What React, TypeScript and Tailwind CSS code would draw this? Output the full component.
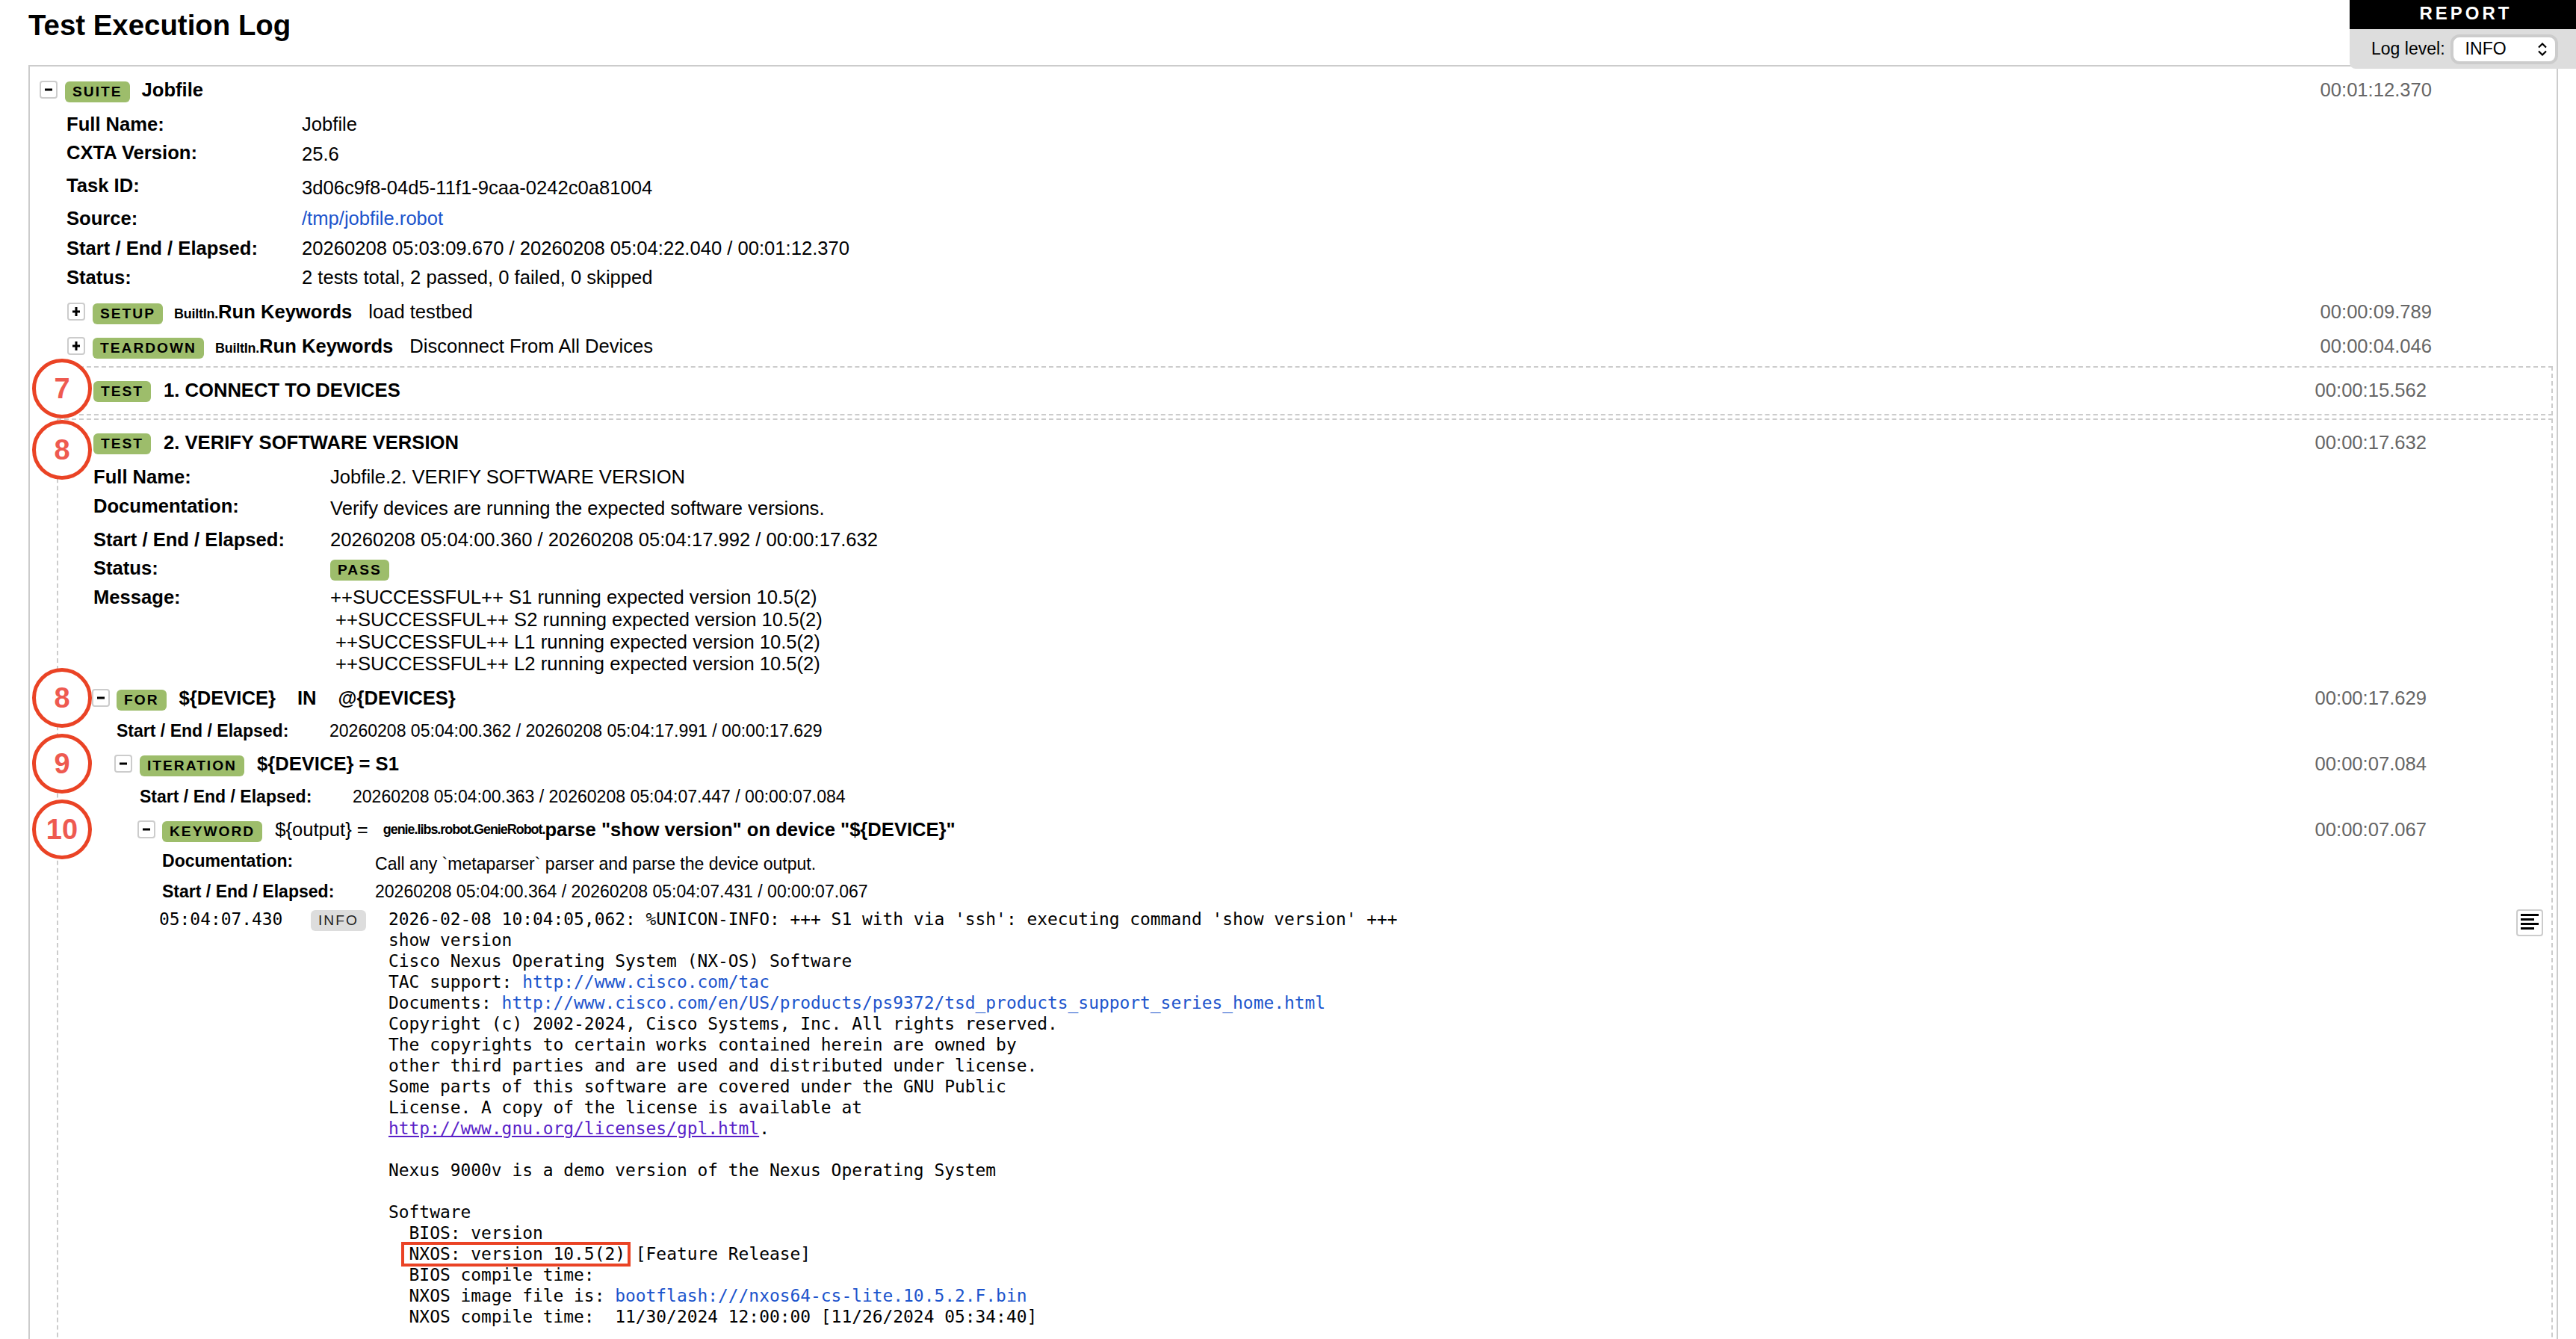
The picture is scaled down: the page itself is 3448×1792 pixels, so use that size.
import React from "react";

function Toggle({ plus = false }: { plus?: boolean }) {
  return (
    <span className="flex h-6 w-6 shrink-0 items-center justify-center rounded-[4px] border-2 border-[#ccc] bg-white">
      <svg width="12" height="14" viewBox="0 0 12 14">
        <rect x="1" y="5.5" width="10" height="3" fill="#000" />
        {plus && <rect x="4.5" y="1" width="3" height="12" fill="#000" />}
      </svg>
    </span>
  );
}

function Badge({ children, gray = false }: { children: React.ReactNode; gray?: boolean }) {
  return (
    <span
      className={`mt-1 inline-flex h-7 shrink-0 items-center rounded-[6px] px-[10px] text-[19.2px] tracking-[2px] ${
        gray ? "bg-[#ddd] font-normal text-[#222]" : "bg-[#9dbd6b] font-bold text-black"
      }`}
    >
      {children}
    </span>
  );
}

function Elapsed({ children }: { children: React.ReactNode }) {
  return <span className="ml-auto mr-[167px] font-normal text-[#666]">{children}</span>;
}

function Circle({ n, className }: { n: number; className: string }) {
  return (
    <div
      className={`absolute left-[43px] flex h-20 w-20 items-center justify-center rounded-full border-[5px] border-[#ea4325] bg-white text-[38px] font-bold text-[#ee5a50] ${className}`}
    >
      {n}
    </div>
  );
}

const link = "text-[#1c54cc]";

export default function App() {
  return (
    <div className="relative h-[1792px] overflow-hidden bg-white font-['Liberation_Sans',sans-serif] text-[25.6px] text-black">
      <h1 className="flex h-[87px] items-start pl-[38px] pt-[10px] text-[38.4px] font-bold leading-[48px]">
        Test Execution Log
      </h1>

      {/* Report header panel */}
      <div className="absolute right-0 top-0 z-10 w-[303px]">
        <div className="flex h-[39px] items-center justify-center bg-black pb-1 pl-2 text-[24px] font-bold tracking-[4px] text-white">
          REPORT
        </div>
        <div className="flex h-[53px] items-center rounded-bl-[8px] bg-[#ddd] pl-[29px] text-[23.04px]">
          <span>Log level:</span>
          <div className="ml-[7px] flex h-10 w-[144px] items-center justify-between rounded-[12px] border-4 border-[#ccc] bg-white pl-4 pr-[10px]">
            <span>INFO</span>
            <svg width="14" height="20" viewBox="0 0 14 20" fill="none" stroke="#000" strokeWidth="2.2">
              <path d="M2 7.5 7 2.5 12 7.5" />
              <path d="M2 12.5 7 17.5 12 12.5" />
            </svg>
          </div>
        </div>
      </div>

      {/* Suite */}
      <div className="ml-[38px] mr-6 h-[1800px] border-2 border-[#ccc]">
        <div className="flex h-[62px] items-center pl-[13px]">
          <Toggle />
          <span className="ml-[10px]"><Badge>SUITE</Badge></span>
          <b className="ml-4">Jobfile</b>
          <Elapsed>00:01:12.370</Elapsed>
        </div>

        <div className="pl-[49px]">
          <div className="flex h-[30px] items-center">
            <b className="w-[315px]">Full Name:</b>
            <span>Jobfile</span>
          </div>
          <div className="flex h-[48px] items-center">
            <b className="w-[315px] pb-[2px]">CXTA Version:</b>
            <span className="pt-[2px]">25.6</span>
          </div>
          <div className="flex h-[41px] items-center">
            <b className="w-[315px] pb-[3px]">Task ID:</b>
            <span className="pt-[3px]">3d06c9f8-04d5-11f1-9caa-0242c0a81004</span>
          </div>
          <div className="flex h-[44px] items-center">
            <b className="w-[315px]">Source:</b>
            <span className={link}>/tmp/jobfile.robot</span>
          </div>
          <div className="flex h-[36px] items-center">
            <b className="w-[315px]">Start / End / Elapsed:</b>
            <span>20260208 05:03:09.670 / 20260208 05:04:22.040 / 00:01:12.370</span>
          </div>
          <div className="flex h-[42px] items-center">
            <b className="w-[315px]">Status:</b>
            <span>2 tests total, 2 passed, 0 failed, 0 skipped</span>
          </div>
        </div>

        <div className="flex h-[50px] items-center pl-[50px]">
          <Toggle plus />
          <span className="ml-[10px]"><Badge>SETUP</Badge></span>
          <span className="ml-[15px]">
            <span className="text-[17.92px] font-bold tracking-[-0.2px]">BuiltIn.</span>
            <b>Run Keywords</b>
          </span>
          <span className="ml-[22px]">load testbed</span>
          <Elapsed>00:00:09.789</Elapsed>
        </div>
        <div className="flex h-[42px] items-center pl-[50px]">
          <Toggle plus />
          <span className="ml-[10px]"><Badge>TEARDOWN</Badge></span>
          <span className="ml-[15px]">
            <span className="text-[17.92px] font-bold tracking-[-0.2px]">BuiltIn.</span>
            <b>Run Keywords</b>
          </span>
          <span className="ml-[22px]">Disconnect From All Devices</span>
          <Elapsed>00:00:04.046</Elapsed>
        </div>

        {/* Test 1 */}
        <div className="ml-9 mr-[5px] mt-[6px] border-2 border-dashed border-[#ccc]">
          <div className="flex h-[60px] items-center pl-[47px]">
            <Badge>TEST</Badge>
            <b className="ml-[17px]">1. CONNECT TO DEVICES</b>
            <Elapsed>00:00:15.562</Elapsed>
          </div>
          <div className="h-[2px]" />
        </div>

        {/* Test 2 */}
        <div className="ml-9 mr-[5px] mt-1 h-[1400px] border-2 border-dashed border-[#ccc]">
          <div className="flex h-[60px] items-center pl-[47px]">
            <Badge>TEST</Badge>
            <b className="ml-[17px]">2. VERIFY SOFTWARE VERSION</b>
            <Elapsed>00:00:17.632</Elapsed>
          </div>

          <div className="pl-[47px]">
            <div className="flex h-8 items-center">
              <b className="w-[317px]">Full Name:</b>
              <span>Jobfile.2. VERIFY SOFTWARE VERSION</span>
            </div>
            <div className="flex h-[49px] items-center">
              <b className="w-[317px] pb-[3px]">Documentation:</b>
              <span className="pt-[3px]">Verify devices are running the expected software versions.</span>
            </div>
            <div className="flex h-[38px] items-center">
              <b className="w-[317px]">Start / End / Elapsed:</b>
              <span>20260208 05:04:00.360 / 20260208 05:04:17.992 / 00:00:17.632</span>
            </div>
            <div className="flex h-10 items-center">
              <b className="w-[317px] pb-[2px]">Status:</b>
              <Badge>PASS</Badge>
            </div>
            <div className="mt-1 flex items-start leading-[29.8px]">
              <b className="w-[317px]">Message:</b>
              <div className="whitespace-pre">
                <div>++SUCCESSFUL++ S1 running expected version 10.5(2)</div>
                <div> ++SUCCESSFUL++ S2 running expected version 10.5(2)</div>
                <div> ++SUCCESSFUL++ L1 running expected version 10.5(2)</div>
                <div> ++SUCCESSFUL++ L2 running expected version 10.5(2)</div>
              </div>
            </div>
          </div>

          {/* FOR */}
          <div className="flex h-[60px] items-center pl-[45px]">
            <Toggle />
            <span className="ml-[9px]"><Badge>FOR</Badge></span>
            <span className="ml-[17px]">
              <b>{"${DEVICE}"}</b>
              <b className="ml-[29px]">IN</b>
              <b className="ml-[29px]">{"@{DEVICES}"}</b>
            </span>
            <Elapsed>00:00:17.629</Elapsed>
          </div>
          <div className="flex h-7 items-center pl-[78px] text-[23.04px]">
            <b className="w-[285px]">Start / End / Elapsed:</b>
            <span>20260208 05:04:00.362 / 20260208 05:04:17.991 / 00:00:17.629</span>
          </div>

          {/* ITERATION */}
          <div className="flex h-[60px] items-center pl-[75px]">
            <Toggle />
            <span className="ml-[10px]"><Badge>ITERATION</Badge></span>
            <b className="ml-[17px]">{"${DEVICE} = S1"}</b>
            <Elapsed>00:00:07.084</Elapsed>
          </div>
          <div className="flex h-7 items-center pl-[109px] text-[23.04px]">
            <b className="w-[285px]">Start / End / Elapsed:</b>
            <span>20260208 05:04:00.363 / 20260208 05:04:07.447 / 00:00:07.084</span>
          </div>

          {/* KEYWORD */}
          <div className="flex h-[60px] items-center pl-[106px]">
            <Toggle />
            <span className="ml-[9px]"><Badge>KEYWORD</Badge></span>
            <span className="ml-[17px]">{"${output} ="}</span>
            <span className="ml-[20px] text-[17.92px] font-bold tracking-[-1px]">genie.libs.robot.GenieRobot.</span>
            <b>{'parse "show version" on device "${DEVICE}"'}</b>
            <Elapsed>00:00:07.067</Elapsed>
          </div>
          <div className="flex h-7 items-center pl-[139px] text-[23.04px]">
            <b className="w-[285px] pb-1">Documentation:</b>
            <span className="pt-1">Call any `metaparser` parser and parse the device output.</span>
          </div>
          <div className="flex h-[50px] items-center pl-[139px] text-[23.04px]">
            <b className="w-[285px]">Start / End / Elapsed:</b>
            <span>20260208 05:04:00.364 / 20260208 05:04:07.431 / 00:00:07.067</span>
          </div>

          {/* Log message */}
          <div className="-mt-[2px] flex items-start pl-[135px] font-['DejaVu_Sans_Mono',monospace] text-[22.9px] leading-[28px]">
            <span className="w-[203px] shrink-0">05:04:07.430</span>
            <span className="-mt-[2px] w-[104px] shrink-0 font-['Liberation_Sans',sans-serif]"><Badge gray>INFO</Badge></span>
            <pre className="font-['DejaVu_Sans_Mono',monospace]">
              {"2026-02-08 10:04:05,062: %UNICON-INFO: +++ S1 with via 'ssh': executing command 'show version' +++\n"}
              {"show version\n"}
              {"Cisco Nexus Operating System (NX-OS) Software\n"}
              {"TAC support: "}<span className={link}>http://www.cisco.com/tac</span>{"\n"}
              {"Documents: "}<span className={link}>http://www.cisco.com/en/US/products/ps9372/tsd_products_support_series_home.html</span>{"\n"}
              {"Copyright (c) 2002-2024, Cisco Systems, Inc. All rights reserved.\n"}
              {"The copyrights to certain works contained herein are owned by\n"}
              {"other third parties and are used and distributed under license.\n"}
              {"Some parts of this software are covered under the GNU Public\n"}
              {"License. A copy of the license is available at\n"}
              <span className="text-[#5a1fc8] underline">http://www.gnu.org/licenses/gpl.html</span>{".\n"}
              {"\n"}
              {"Nexus 9000v is a demo version of the Nexus Operating System\n"}
              {"\n"}
              {"Software\n"}
              {"  BIOS: version\n"}
              {"  "}
              <span className="relative">
                NXOS: version 10.5(2)
                <span className="absolute -bottom-[4px] -left-[11px] -right-[7px] -top-[3px] border-4 border-[#ea4325]" />
              </span>
              {" [Feature Release]\n"}
              {"  BIOS compile time:\n"}
              {"  NXOS image file is: "}<span className={link}>bootflash:///nxos64-cs-lite.10.5.2.F.bin</span>{"\n"}
              {"  NXOS compile time:  11/30/2024 12:00:00 [11/26/2024 05:34:40]\n"}
            </pre>
            <div className="ml-auto mr-[11px] mt-[1px] flex h-9 w-9 shrink-0 flex-col gap-[3px] rounded-[4px] border-2 border-[#ccc] px-1 pt-1">
              <div className="h-[3px] w-6 bg-black" />
              <div className="h-[3px] w-[18px] bg-black" />
              <div className="h-[3px] w-6 bg-black" />
              <div className="h-[3px] w-[18px] bg-black" />
            </div>
          </div>
        </div>
      </div>

      {/* Numbered callouts */}
      <Circle n={7} className="top-[480px]" />
      <Circle n={8} className="top-[562px]" />
      <Circle n={8} className="top-[894px]" />
      <Circle n={9} className="top-[982px]" />
      <Circle n={10} className="top-[1070px]" />
    </div>
  );
}
